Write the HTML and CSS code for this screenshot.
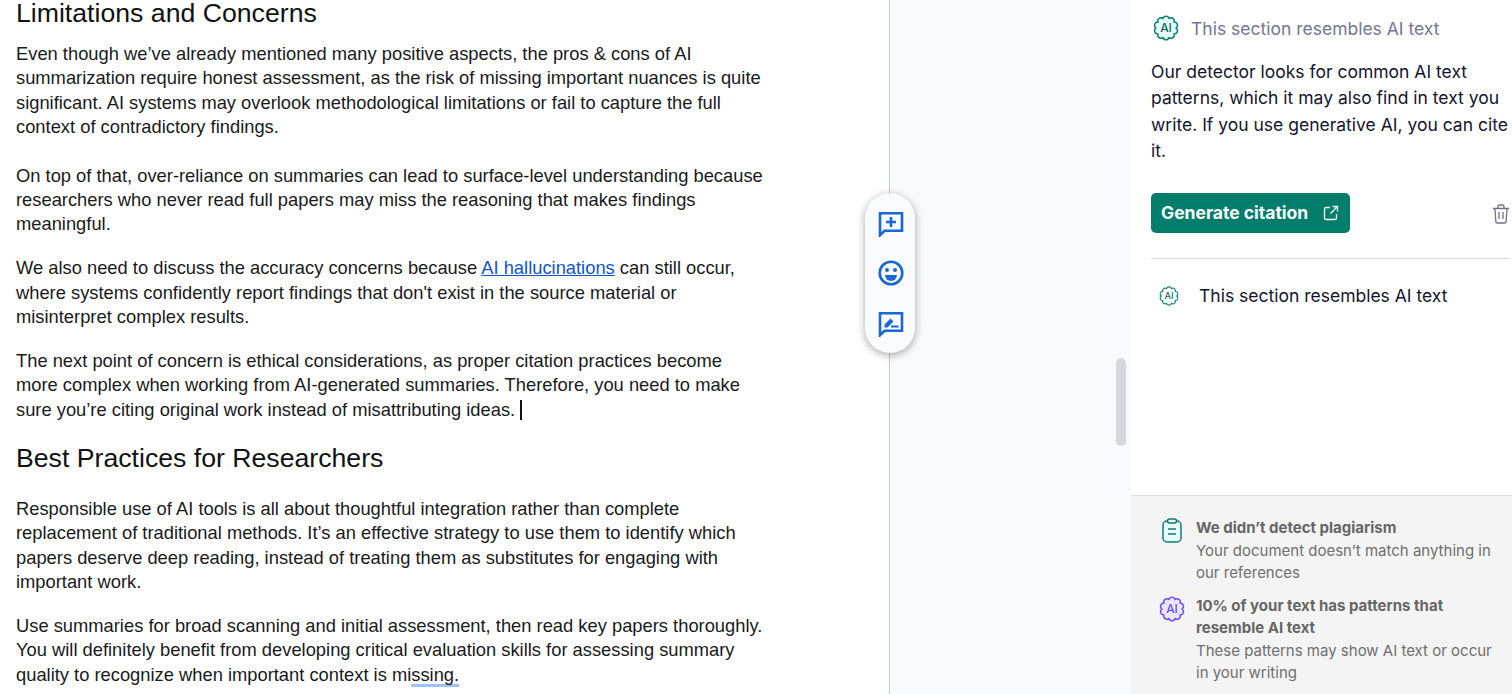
FILE: index.html
```html
<!DOCTYPE html>
<html lang="en">
<head>
  <meta charset="UTF-8">
  <meta name="viewport" content="width=device-width, initial-scale=1.0">
  <title>Limitations and Concerns</title>
  <link rel="stylesheet" href="styles.css">
</head>
<body>

  <svg class="defs" width="0" height="0">
    <symbol id="blob" viewBox="0 0 24 24">
      <path d="M21.3 12A3 3 0 0 1 19.52 17.47A3 3 0 0 1 14.87 20.84A3 3 0 0 1 9.13 20.84A3 3 0 0 1 4.48 17.47A3 3 0 0 1 2.7 12A3 3 0 0 1 4.48 6.53A3 3 0 0 1 9.13 3.16A3 3 0 0 1 14.87 3.16A3 3 0 0 1 19.52 6.53A3 3 0 0 1 21.3 12Z"/>
    </symbol>
  </svg>

  <!-- Document -->
  <div class="doc">
    <h2 class="first">Limitations and Concerns</h2>
    <p>Even though we’ve already mentioned many positive aspects, the pros &amp; cons of AI summarization require honest assessment, as the risk of missing important nuances is quite significant. AI systems may overlook methodological limitations or fail to capture the full context of contradictory findings.</p>
    <p class="blank-before">On top of that, over-reliance on summaries can lead to surface-level understanding because researchers who never read full papers may miss the reasoning that makes findings meaningful.</p>
    <p>We also need to discuss the accuracy concerns because <a href="#">AI hallucinations</a> can still occur, where systems confidently report findings that don't exist in the source material or misinterpret complex results.</p>
    <p>The next point of concern is ethical considerations, as proper citation practices become more complex when working from AI-generated summaries. Therefore, you need to make sure you’re citing original work instead of misattributing ideas. <span class="caret"></span></p>
    <h2>Best Practices for Researchers</h2>
    <p>Responsible use of AI tools is all about thoughtful integration rather than complete replacement of traditional methods. It’s an effective strategy to use them to identify which papers deserve deep reading, instead of treating them as substitutes for engaging with important work.</p>
    <p>Use summaries for broad scanning and initial assessment, then read key papers thoroughly. You will definitely benefit from developing critical evaluation skills for assessing summary quality to recognize when important context is mi<span class="spell">ssing.</span></p>
  </div>

  <!-- Floating doc actions -->
  <div class="float-actions">
    <svg viewBox="0 0 28 28" width="28" height="28"><path class="act" d="M3 4.2h22v17.6H7.5L3 26.2Z"/><path class="act" d="M14 8v10M9 13h10"/></svg>
    <svg viewBox="0 0 28 28" width="28" height="28"><circle class="act" cx="14" cy="14" r="11.3"/><circle class="dot" cx="10" cy="11" r="2"/><circle class="dot" cx="18" cy="11" r="2"/><path class="dot" d="M8 16h12a6 6 0 0 1-12 0Z"/></svg>
    <svg viewBox="0 0 28 28" width="28" height="28"><path class="act" d="M3 4.2h22v17.6H7.5L3 26.2Z"/><path class="dot" d="M7.5 18.5v-3l6-6 3 3-6 6ZM14 16.5h7.5v2H14Z"/></svg>
  </div>

  <!-- Gutter with scrollbar -->
  <div class="gutter">
    <div class="scroll-thumb"></div>
  </div>

  <!-- Right panel -->
  <div class="panel">
    <div class="panel-top">
      <div class="card-head">
        <svg class="blob-icon teal" viewBox="0 0 24 24" width="26" height="26"><use href="#blob"/><text x="12" y="16" text-anchor="middle">AI</text></svg>
        <span>This section resembles AI text</span>
      </div>
      <div class="card-text">Our detector looks for common AI text patterns, which it may also find in text you write. If you use generative AI, you can cite it.</div>
      <div class="card-actions">
        <button class="cite-btn">Generate citation
          <svg viewBox="0 0 16 16" width="16" height="16"><path d="M7 2.5H3A1.5 1.5 0 0 0 1.5 4v9A1.5 1.5 0 0 0 3 14.5h9a1.5 1.5 0 0 0 1.5-1.5V9M9.500 1.5h5v5M14.500 1.5L7.5 8.5"/></svg>
        </button>
        <svg class="trash" viewBox="0 0 18 20" width="18" height="20"><path d="M1 4.5h16M6 4.5V2.5A1.5 1.5 0 0 1 7.5 1h3A1.5 1.5 0 0 1 12 2.5v2M3 4.5l.8 12.5A2 2 0 0 0 5.8 19h6.4a2 2 0 0 0 2-2L15 4.5M7 8v7M11 8v7"/></svg>
      </div>
      <div class="card-row">
        <svg class="blob-icon teal plain" viewBox="0 0 24 24" width="20" height="20"><use href="#blob"/><text x="12" y="16" text-anchor="middle">AI</text></svg>
        <span>This section resembles AI text</span>
      </div>
    </div>

    <div class="panel-bottom">
      <div class="check">
        <svg class="clip" viewBox="0 0 22 26" width="22" height="26"><rect x="2" y="3" width="18" height="21" rx="4"/><rect class="clip-top" x="6.5" y="1" width="9" height="4" rx="2"/><path d="M7 11h8M7 16h8"/></svg>
        <div>
          <b>We didn’t detect plagiarism</b>
          <div>Your document doesn’t match anything in our references</div>
        </div>
      </div>
      <div class="check">
        <svg class="blob-icon purple" viewBox="0 0 24 24" width="26" height="26"><use href="#blob"/><text x="12" y="16" text-anchor="middle">AI</text></svg>
        <div>
          <b>10% of your text has patterns that resemble AI text</b>
          <div>These patterns may show AI text or occur in your writing</div>
        </div>
      </div>
    </div>
  </div>

</body>
</html>
```

FILE: styles.css
```css
body {
  margin: 0;
  padding: 0;
  height: 694px;
  overflow: hidden;
  display: flex;
  position: relative;
  background-color: white;
  color: #1a1a1a;
  font-family: "Liberation Sans", Arial, sans-serif;
}

.defs {
  position: absolute;
}

.doc {
  flex: none;
  width: 890px;
  height: 694px;
  box-sizing: border-box;
  overflow: hidden;
  padding: 0 124px 0 16px;
  border-right: 1px solid #c9c9c9;
  font-size: 18.33px;
  line-height: 24.35px;
}

.doc h2 {
  font-size: 26.67px;
  font-weight: 400;
  line-height: 32px;
  margin: 20px 0 23px;
  color: #111;
}

.doc h2.first {
  margin: -3px 0 0;
}

.doc p {
  margin: 0 0 19.6px;
}

.doc p:first-of-type {
  margin-top: 13px;
}

.doc p.blank-before {
  margin-top: 24.2px;
}

.doc a {
  color: #1155cc;
}

.caret {
  display: inline-block;
  width: 2px;
  height: 20px;
  background-color: #111;
  vertical-align: -4px;
}

.spell {
  text-decoration: underline 3px #9dc2fb;
  text-underline-offset: 3px;
  text-decoration-skip-ink: none;
}

.float-actions {
  position: absolute;
  z-index: 2;
  left: 865px;
  top: 193px;
  width: 50px;
  height: 160px;
  box-sizing: border-box;
  padding: 16px 0 16px 2px;
  border-radius: 25px;
  background-color: #f9fbff;
  box-shadow: 0 2px 8px rgba(0, 0, 0, 0.35);
  display: flex;
  flex-direction: column;
  align-items: center;
  justify-content: space-between;
}

.act {
  fill: none;
  stroke: #1a66d6;
  stroke-width: 2.6;
}

.dot {
  fill: #1a66d6;
}

.gutter {
  flex: none;
  width: 241px;
  background-color: #f9fafd;
  position: relative;
}

.scroll-thumb {
  position: absolute;
  left: 226px;
  top: 358px;
  width: 10px;
  height: 88px;
  border-radius: 5px;
  background-color: #d6d7db;
}

.panel {
  flex: 1;
  display: flex;
  flex-direction: column;
  background-color: white;
  font-family: Inter, Arial, sans-serif;
  border-left: 1px solid #eeeeee;
  margin-left: -1px;
}

.panel-top {
  flex: 1;
  padding: 0 2px 0 20px;
}

.card-head {
  display: flex;
  align-items: center;
  gap: 12px;
  margin-left: 2px;
  height: 36px;
  margin-top: 10px;
  font-size: 17.5px;
  color: #75758f;
}

.card-text {
  font-size: 17.5px;
  line-height: 26.4px;
  color: #14142b;
  margin-top: 13px;
}

.card-actions {
  display: flex;
  justify-content: space-between;
  align-items: center;
  margin-top: 28.4px;
  padding-bottom: 25px;
  border-bottom: 1px solid #dcdcdf;
}

.cite-btn {
  display: flex;
  align-items: center;
  gap: 15px;
  width: 199px;
  height: 40px;
  padding: 0 10px 2px;
  border: none;
  border-radius: 5px;
  background-color: #007d6b;
  color: white;
  font-family: Inter, Arial, sans-serif;
  font-size: 17.5px;
  font-weight: 700;
}

.cite-btn svg {
  fill: none;
  stroke: white;
  stroke-width: 1.3;
  margin-top: 2px;
}

.trash {
  fill: none;
  stroke: #70708a;
  stroke-width: 1.3;
  margin-top: 2px;
}

.card-row {
  display: flex;
  align-items: center;
  gap: 20px;
  margin: 26px 0 0 8px;
  font-size: 17.5px;
  color: #14142b;
}

.panel-bottom {
  flex: none;
  height: 199px;
  box-sizing: border-box;
  padding: 21px 10px 0 28px;
  border-top: 1px solid #dddddd;
  background-color: #f4f4f4;
  color: #6f6f6f;
  font-size: 15px;
  line-height: 22px;
}

.check {
  display: flex;
  gap: 11px;
  margin-bottom: 11px;
}

.check > svg {
  flex: none;
  width: 26px;
  margin-top: 1px;
}

.check b {
  display: block;
  margin-bottom: 1px;
  font-weight: 700;
  color: #666666;
}

.blob-icon use {
  stroke-width: 1.3;
}

.blob-icon text {
  font-family: Inter, Arial, sans-serif;
  font-size: 11px;
  font-weight: 500;
}

.teal {
  fill: #e6fbf8;
  stroke: #007d6b;
}

.teal.plain {
  fill: white;
}

.teal text {
  fill: #0c6b5f;
  stroke: none;
}

.purple {
  fill: #e9e6ff;
  stroke: #6d4bf0;
}

.purple text {
  fill: #6d4bf0;
  stroke: none;
}

.clip {
  fill: #e6fbf8;
  stroke: #0f7b70;
  stroke-width: 1.5;
}

.clip-top {
  fill: #f4f4f4;
}
```
